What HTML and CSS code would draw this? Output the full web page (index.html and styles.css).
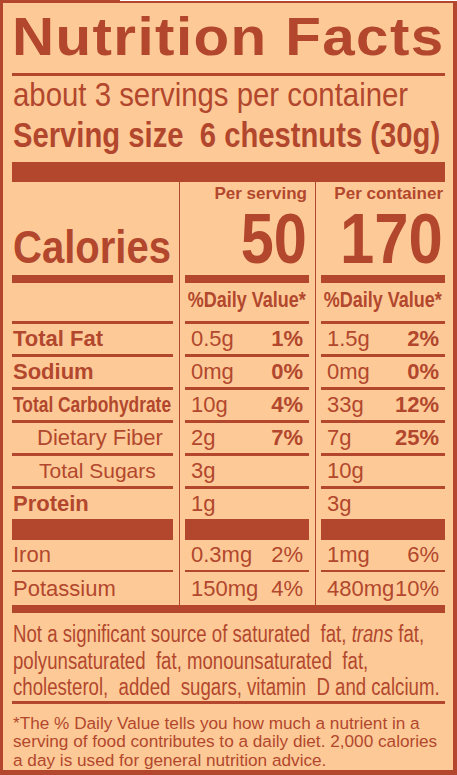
FILE: index.html
```
<!DOCTYPE html>
<html lang="en">
  <head>
    <meta charset="UTF-8" />
    <meta name="viewport" content="width=device-width, initial-scale=1.0" />
    <title>Nutrition Facts - Chestnuts</title>
    <link rel="stylesheet" href="styles.css">
  </head>
  <body>
    <div class="label">
      <h1 class="title"><span class="squeeze wide">Nutrition Facts</span></h1>
      <p class="servings"><span class="squeeze">about 3 servings per container</span></p>
      <p class="serving-size"><span class="squeeze">Serving size&nbsp; 6 chestnuts (30g)</span></p>
      <div class="heavy-bar"></div>

      <div class="facts">
        <div class="vline first"></div>
        <div class="vline second"></div>

        <!-- calories -->
        <div class="cell c1 thick calories"><span class="squeeze">Calories</span></div>
        <div class="cell c2 thick kcal-cell">
          <span class="per">Per serving</span>
          <span class="kcal">50</span>
        </div>
        <div class="cell c3 thick kcal-cell">
          <span class="per">Per container</span>
          <span class="kcal big">170</span>
        </div>

        <div class="cell c1"></div>
        <div class="cell c2 dv"><span class="squeeze">%Daily Value*</span></div>
        <div class="cell c3 dv"><span class="squeeze">%Daily Value*</span></div>

        <!-- nutrients -->
        <div class="cell c1 name bold">Total Fat</div>
        <div class="cell c2 pair"><span>0.5g</span><b>1%</b></div>
        <div class="cell c3 pair"><span>1.5g</span><b>2%</b></div>

        <div class="cell c1 name bold">Sodium</div>
        <div class="cell c2 pair"><span>0mg</span><b>0%</b></div>
        <div class="cell c3 pair"><span>0mg</span><b>0%</b></div>

        <div class="cell c1 name bold"><span class="squeeze carb">Total Carbohydrate</span></div>
        <div class="cell c2 pair"><span>10g</span><b>4%</b></div>
        <div class="cell c3 pair"><span>33g</span><b>12%</b></div>

        <div class="cell c1 name sub">Dietary Fiber</div>
        <div class="cell c2 pair"><span>2g</span><b>7%</b></div>
        <div class="cell c3 pair"><span>7g</span><b>25%</b></div>

        <div class="cell c1 name sub sugars">Total Sugars</div>
        <div class="cell c2 pair"><span>3g</span></div>
        <div class="cell c3 pair"><span>10g</span></div>

        <div class="cell c1 name bold bar-below">Protein</div>
        <div class="cell c2 pair bar-below"><span>1g</span></div>
        <div class="cell c3 pair bar-below"><span>3g</span></div>

        <div class="cell c1 name thin">Iron</div>
        <div class="cell c2 pair thin"><span>0.3mg</span><span>2%</span></div>
        <div class="cell c3 pair thin"><span>1mg</span><span>6%</span></div>

        <div class="cell c1 name open">Potassium</div>
        <div class="cell c2 pair open"><span>150mg</span><span>4%</span></div>
        <div class="cell c3 pair open"><span>480mg</span><span>10%</span></div>
      </div>

      <div class="bottom-bar"></div>

      <p class="note"><span class="squeeze">Not a significant source of saturated&nbsp; fat, <i>trans</i> fat,<br />polyunsaturated&nbsp; fat, monounsaturated&nbsp; fat,<br />cholesterol,&nbsp; added&nbsp; sugars, vitamin&nbsp; D and calcium.</span></p>

      <p class="footnote">
        *The % Daily Value tells you how much a nutrient in a<br />
        serving of food contributes to a daily diet. 2,000 calories<br />
        a day is used for general nutrition advice.
      </p>
    </div>
  </body>
</html>
```

FILE: styles.css
```
* {
  box-sizing: border-box;
}

body {
  margin: 0;
  padding-top: 1px;
  /* scanned edge: a darker tab at the top left */
  background: linear-gradient(to right, #b2472d 120px, #ffffff 120px);
  font-family: "Liberation Sans", Arial, sans-serif;
  color: #b2472d;
  overflow: hidden;
}

.label {
  width: 457px;
  height: 774px;
  overflow: hidden;
  background: #fdca97;
  border-style: solid;
  border-color: #b2472d;
  border-width: 2px 4px 5px 3px;
  padding: 0 8px 0 9px;
}

/* the printed label uses a taller, narrower face than Arial */
.squeeze {
  display: inline-block;
  white-space: nowrap;
  transform-origin: left center;
}

.title {
  margin: 6px 0 0;
  padding-bottom: 10px;
  border-bottom: 3px solid #b2472d;
  font-size: 54px;
  line-height: 54px;
  font-weight: bold;
  letter-spacing: 1.3px;
  white-space: nowrap;
}

.title .wide {
  transform: scaleX(1.08);
}

.servings {
  margin: 2px 0 0 1px;
  font-size: 33px;
  line-height: 34px;
  white-space: nowrap;
}

.servings .squeeze {
  transform: scaleX(0.89);
}

.serving-size {
  margin: 5px 0 0 1px;
  font-size: 35px;
  line-height: 36px;
  font-weight: bold;
  white-space: nowrap;
}

.serving-size .squeeze {
  transform: scaleX(0.835);
}

.heavy-bar {
  margin-top: 9px;
  height: 20px;
  background: #b2472d;
}

/* three column table, the 12px columns hold the divider lines */
.facts {
  display: grid;
  grid-template-columns: 161px 12px 124px 12px 124px;
  grid-template-rows: 101px 41px 33px 33px 33px 33px 33px 51px 32px 33px;
}

.vline {
  grid-row: 1 / -1;
  margin-left: 6px;
  border-left: 1px solid #b2472d;
}

.vline.first {
  grid-column: 2;
}

.vline.second {
  grid-column: 4;
}

.cell {
  border-bottom: 3px solid #b2472d;
  font-size: 22px;
  line-height: 30px;
  white-space: nowrap;
}

.c1 {
  grid-column: 1;
}

.c2 {
  grid-column: 3;
}

.c3 {
  grid-column: 5;
}

.thick {
  border-bottom-width: 8px;
}

.bar-below {
  border-bottom-width: 21px;
}

.thin {
  border-bottom-width: 2px;
}

.open {
  border-bottom: none;
  line-height: 33px;
}

.calories {
  display: flex;
  align-items: flex-end;
  padding: 0 0 4px 1px;
  font-size: 46px;
  line-height: 48px;
  font-weight: bold;
}

.calories .squeeze {
  transform: scaleX(0.87);
}

.kcal-cell {
  display: flex;
  flex-direction: column;
  align-items: flex-end;
  padding: 2px 2px 7px 0;
}

.per {
  font-size: 17px;
  line-height: 20px;
  font-weight: bold;
}

.kcal {
  margin-top: auto;
  font-size: 70px;
  line-height: 58px;
  font-weight: bold;
  transform: scaleX(0.85);
  transform-origin: right center;
}

.kcal.big {
  transform: scaleX(0.88);
}

.dv {
  display: flex;
  justify-content: center;
  font-size: 22.5px;
  line-height: 34px;
  font-weight: bold;
}

.dv .squeeze {
  transform: scaleX(0.8);
  transform-origin: center;
}

.name {
  padding-left: 1px;
}

.bold {
  font-weight: bold;
}

.carb {
  transform: scaleX(0.79);
}

.sub {
  padding-left: 25px;
}

.sugars {
  padding-left: 27px;
  font-size: 21px;
}

.pair {
  display: flex;
  justify-content: space-between;
  padding: 0 6px;
}

.bottom-bar {
  height: 8px;
  background: #b2472d;
}

.note {
  margin: 8px 0 0;
  padding-left: 1px;
  border-bottom: 3px solid #b2472d;
  font-size: 23px;
  line-height: 26.5px;
  white-space: nowrap;
}

.note .squeeze {
  transform: scaleX(0.81);
}

.footnote {
  margin: 10px 0 0;
  padding-left: 1px;
  font-size: 17.2px;
  line-height: 18.5px;
  white-space: nowrap;
}
```
